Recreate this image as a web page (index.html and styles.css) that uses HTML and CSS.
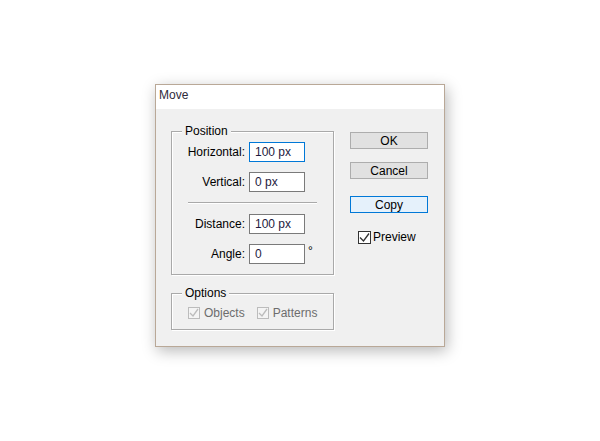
FILE: index.html
```html
<!DOCTYPE html>
<html lang="en">

<head>
    <meta charset="UTF-8">
    <meta name="viewport" content="width=device-width, initial-scale=1.0">
    <title>Move</title>

    <link rel="stylesheet" href="styles.css">

</head>

<body>
    <div class="screen">
        <div class="dialog">
            <div class="titlebar">Move</div>
            <div class="content">
                <div class="left">
                    <div class="group position">
                        <span class="groupTitle">Position</span>
                        <div class="row">
                            <label class="label">Horizontal:</label>
                            <input class="field focus" value="100 px">
                        </div>
                        <div class="row">
                            <label class="label">Vertical:</label>
                            <input class="field" value="0 px">
                        </div>
                        <div class="sep"></div>
                        <div class="row">
                            <label class="label">Distance:</label>
                            <input class="field" value="100 px">
                        </div>
                        <div class="row">
                            <label class="label">Angle:</label>
                            <input class="field" value="0">
                            <span class="deg">&deg;</span>
                        </div>
                    </div>
                    <div class="group options">
                        <span class="groupTitle">Options</span>
                        <div class="check disabled">
                            <span class="box">
                                <svg width="10" height="10" viewBox="0 0 10 10"><polyline points="1,5 4,8 9,1" fill="none" stroke="#bcbcbc" stroke-width="1.3"/></svg>
                            </span>
                            Objects
                        </div>
                        <div class="check disabled">
                            <span class="box">
                                <svg width="10" height="10" viewBox="0 0 10 10"><polyline points="1,5 4,8 9,1" fill="none" stroke="#bcbcbc" stroke-width="1.3"/></svg>
                            </span>
                            Patterns
                        </div>
                    </div>
                </div>
                <div class="right">
                    <button class="btn">OK</button>
                    <button class="btn cancel">Cancel</button>
                    <button class="btn copy">Copy</button>
                    <div class="check preview">
                        <span class="box">
                            <svg width="11" height="11" viewBox="0 0 11 11"><polyline points="1,5.5 4.5,9 10,1.5" fill="none" stroke="#333" stroke-width="1.3"/></svg>
                        </span>
                        Preview
                    </div>
                </div>
            </div>
        </div>
    </div>
</body>

</html>
```

FILE: styles.css
```css
html,
body {
    height: 100%;
}

body {
    margin: 0;
    background: #fff;
    font: 12px "Liberation Sans", Arial, sans-serif;
    color: #000;
}

.screen {
    min-height: 100%;
    box-sizing: border-box;
    padding: 84px 0 0 155px;
}

.dialog {
    width: 288px;
    border: 1px solid #b9a897;
    background: #f0f0f0;
    box-shadow: 2px 4px 14px rgba(0, 0, 0, 0.28);
}

.titlebar {
    height: 24px;
    line-height: 20px;
    padding-left: 3px;
    background: #fff;
    color: #2e2a3a;
}

.content {
    display: flex;
    height: 237px;
    box-sizing: border-box;
    padding: 22px 0 0 15px;
}

.left {
    width: 163px;
    display: flex;
    flex-direction: column;
    gap: 18px;
}

.group {
    position: relative;
    border: 1px solid #a9a9a9;
    box-shadow: 1px 1px 0 #fff, inset 1px 1px 0 #fff;
    box-sizing: border-box;
}

.groupTitle {
    position: absolute;
    top: -8px;
    left: 10px;
    padding: 0 3px;
    line-height: 14px;
    background: #f0f0f0;
}

.position {
    height: 144px;
    padding: 10px 0;
    display: flex;
    flex-direction: column;
    gap: 10px;
}

.row {
    display: flex;
    align-items: center;
    height: 20px;
}

.label {
    width: 73px;
    text-align: right;
    line-height: 14px;
    margin-right: 4px;
}

.field {
    width: 56px;
    height: 20px;
    box-sizing: border-box;
    border: 1px solid #7a7a7a;
    background: #fff;
    padding: 0 5px;
    font: inherit;
    color: #1e1a40;
    outline: none;
    margin: 0;
}

.field.focus {
    border-color: #0078d7;
}

.deg {
    margin-left: 3px;
    align-self: flex-start;
    line-height: 14px;
}

.sep {
    height: 0;
    margin-left: 16px;
    width: 129px;
    border-top: 1px solid #a9a9a9;
    border-bottom: 1px solid #fff;
}

.options {
    height: 37px;
    display: flex;
    align-items: center;
    padding: 2px 0 0 16px;
    gap: 12px;
}

.check {
    display: flex;
    align-items: center;
    gap: 4px;
    line-height: 14px;
}

.box {
    width: 12px;
    height: 12px;
    box-sizing: border-box;
    border: 1px solid #333;
    background: #fff;
    display: flex;
    align-items: center;
    justify-content: center;
}

.disabled {
    color: #6d6d6d;
}

.disabled .box {
    border-color: #bcbcbc;
    background: #f4f4f4;
}

.right {
    display: flex;
    flex-direction: column;
    align-items: flex-start;
    margin-left: 16px;
    padding-top: 1px;
}

.btn {
    width: 78px;
    height: 17px;
    box-sizing: border-box;
    border: 1px solid #adadad;
    background: #e1e1e1;
    font: inherit;
    font-weight: normal;
    color: #000;
    padding: 0;
    margin: 0;
    line-height: 14px;
}

.cancel {
    margin-top: 13px;
}

.copy {
    margin-top: 17px;
    border-color: #0078d7;
    background: #e5f1fb;
}

.preview {
    margin: 17px 0 0 8px;
    gap: 2px;
}

.preview .box {
    width: 13px;
    height: 13px;
}
```
